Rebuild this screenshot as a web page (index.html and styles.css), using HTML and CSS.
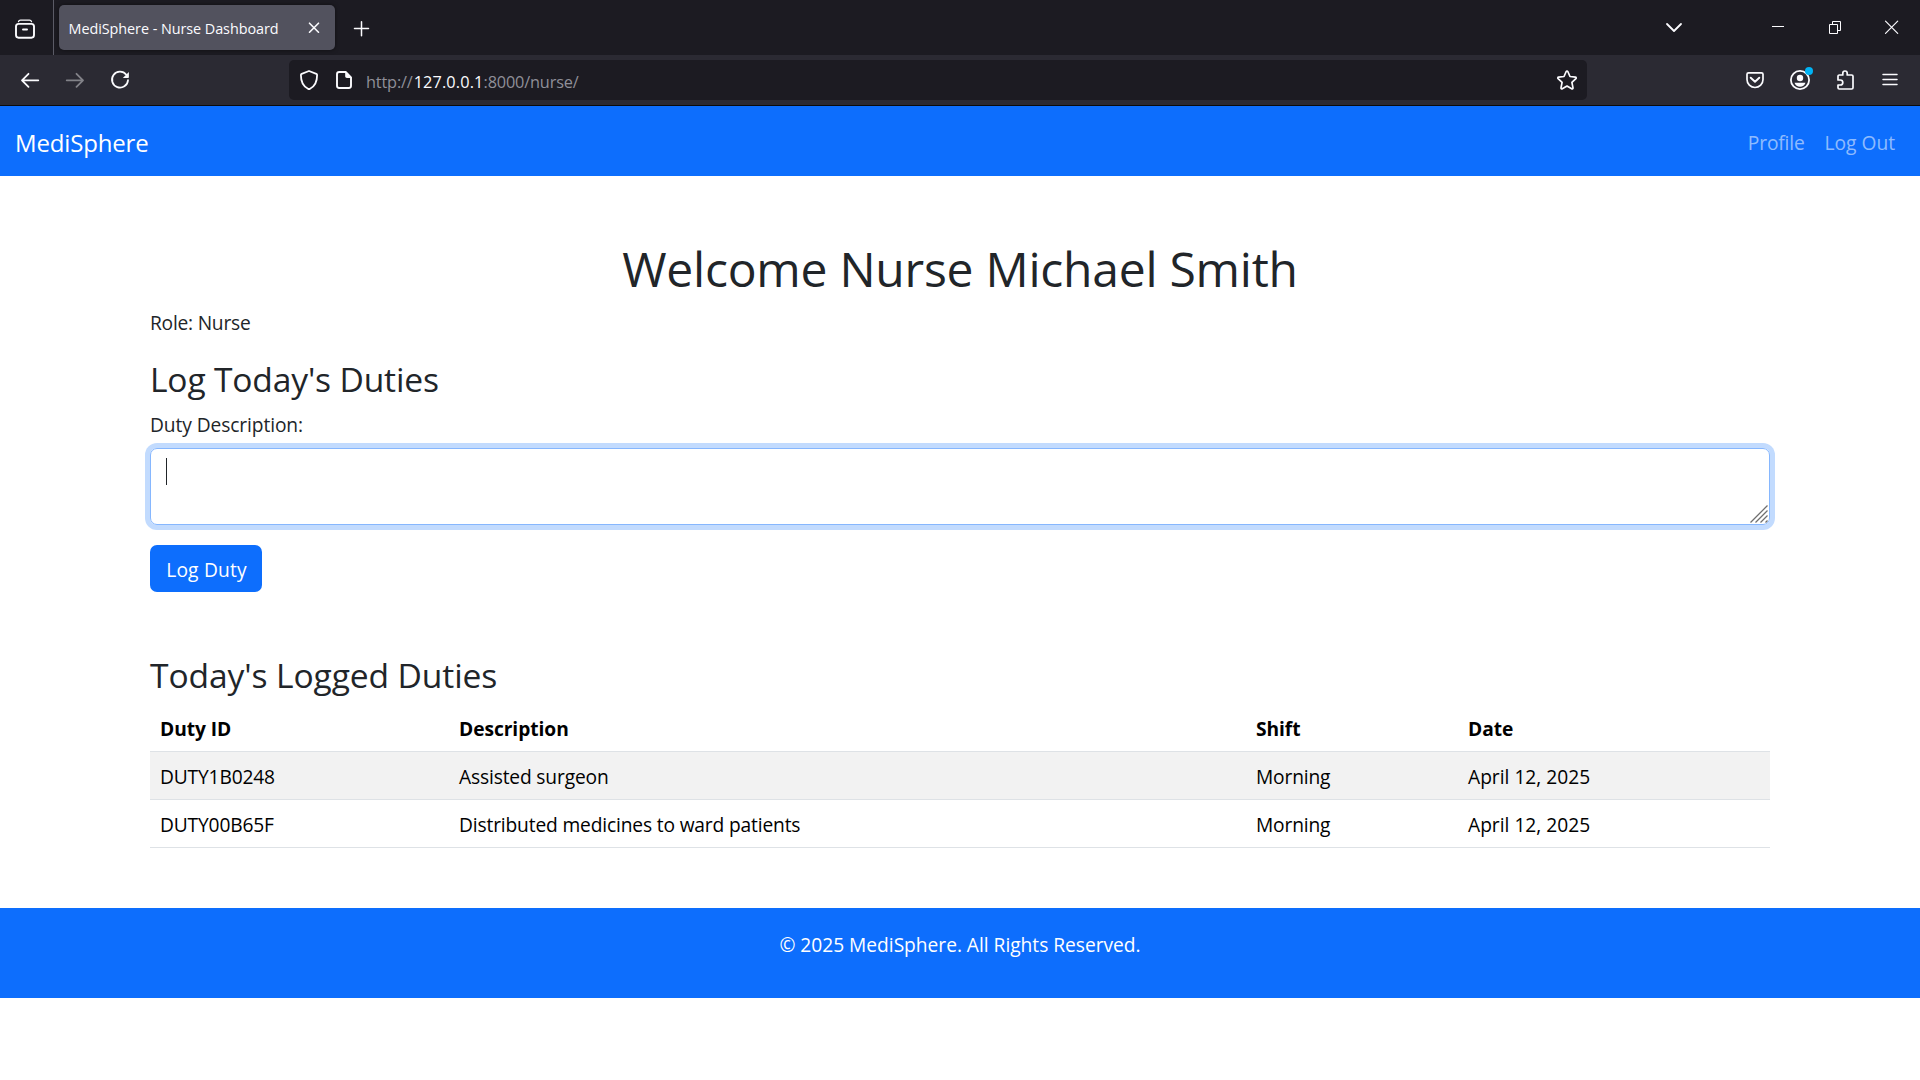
FILE: index.html
```html
<!DOCTYPE html>
<html lang="en">
<head>
<meta charset="utf-8">
<title>MediSphere - Nurse Dashboard</title>
<link rel="stylesheet" href="styles.css">
</head>
<body>
<header class="browser">
  <div class="tabstrip">
    <div class="view-btn">
      <svg class="icon" viewBox="0 0 24 24"><path d="M5.5 5.700C5.800 4.500 6.500 4.200 7.500 4.200h9c1 0 1.700.3 2 1.500" stroke-width="1.300"/><rect x="3" y="7.900" width="18" height="13.800" rx="2.600" stroke-width="1.900"/><path d="M10 13.500h4" stroke-width="1.900"/></svg>
    </div>
    <div class="tab">
      <span class="tab-title">MediSphere - Nurse Dashboard</span>
      <svg class="icon" viewBox="0 0 24 24"><path d="M7.500 7.200l9 9M16.500 7.200l-9 9" stroke-width="1.600"/></svg>
    </div>
    <div class="new-tab">
      <svg class="icon" viewBox="0 0 24 24"><path d="M12.500 6.800v14M5.500 13.500h14" stroke-width="1.500"/></svg>
    </div>
    <div class="all-tabs">
      <svg class="icon" viewBox="0 0 24 24"><path d="M5 9l7 7 7-7" stroke-width="1.800"/></svg>
    </div>
    <div class="window-btns">
      <div class="win"><svg class="icon" viewBox="0 0 24 24"><path d="M6 11.500h12" stroke-width="1" stroke-linecap="butt"/></svg></div>
      <div class="win"><svg class="icon sharp" viewBox="0 0 24 24"><path d="M6.500 9.500h8v9h-8zM9.500 9.500v-3h8v9h-3" stroke-width="1"/></svg></div>
      <div class="win"><svg class="icon" viewBox="0 0 24 24"><path d="M5.500 6.200L17.700 18.400M17.700 6.200L5.500 18.400" stroke-width="1.200"/></svg></div>
    </div>
  </div>
  <div class="toolbar">
    <div class="tool"><svg class="icon" viewBox="0 0 24 24"><path d="M20.300 12.300H4.500M10.500 5.800L4 12.300l6.500 6.500" stroke-width="1.800"/></svg></div>
    <div class="tool dim"><svg class="icon" viewBox="0 0 24 24"><path d="M3.700 12.300h15.800M13.500 5.800l6.500 6.500-6.500 6.500" stroke-width="1.800"/></svg></div>
    <div class="tool"><svg class="icon" viewBox="0 0 24 24"><path d="M18.300 6.700A8 8 0 1 0 20 12.200" stroke-width="1.800"/><path class="solid" d="M20.900 4v5.300c0 .5-.3.700-.8.700h-5.300z"/></svg></div>
    <div class="urlbar">
      <svg class="icon shield" viewBox="0 0 24 24"><path d="M12 3l7.300 2.800c.6.300.8.700.8 1.300 0 5.500-2 11.300-7.100 13.700-.7.300-1.300.3-2 0C5.900 18.400 3.900 12.600 3.900 7.100c0-.6.200-1 .8-1.300z" stroke-width="1.800"/></svg>
      <svg class="icon" viewBox="0 0 24 24"><path d="M13.700 4H7.200C6 4 5 5 5 6.200v11.600C5 19 6 20 7.200 20h9.600c1.200 0 2.200-1 2.200-2.200V9.300z" stroke-width="1.900"/><path class="solid" d="M13.200 3.500v4.800c0 1 .7 1.700 1.700 1.700h4.600z"/></svg>
      <span class="url">http://<b>127.0.0.1</b>:8000/nurse/</span>
      <svg class="icon star" viewBox="0 0 24 24"><path d="M11.200 3.500c.3-.7 1.300-.7 1.600 0l2.200 5 5.400.6c.8.100 1.100 1 .5 1.600l-4 3.700 1.100 5.500c.100.700-.7 1.300-1.300.9L12 18l-4.700 2.800c-.6.400-1.400-.2-1.300-.9l1.100-5.500-4-3.700c-.6-.6-.3-1.500.5-1.600L9 8.500z" stroke-width="1.700"/></svg>
    </div>
    <div class="tool"><svg class="icon" viewBox="0 0 24 24"><path d="M5.500 4.800h13c.9 0 1.500.6 1.500 1.500v5.200a8 8 0 0 1-16 0V6.300c0-.9.600-1.500 1.500-1.500z" stroke-width="1.700"/><path d="M7.700 9.700l4.300 4.100 4.300-4.100" stroke-width="1.900"/></svg></div>
    <div class="tool account"><svg class="icon" viewBox="0 0 24 24"><circle cx="12" cy="12" r="9.100" stroke-width="1.800"/><circle class="solid" cx="12" cy="10" r="3.200"/><path class="solid" d="M6.500 14.700h11c-.9 2.600-3 4-5.500 4s-4.600-1.400-5.500-4z"/></svg><span class="dot"></span></div>
    <div class="tool"><svg class="icon" viewBox="0 0 24 24"><path d="M5 12V8.300C5 7.400 5.500 7 6.300 7h3.500V5.200a2.200 2.200 0 0 1 4.400 0V7h4.400c.9 0 1.400.5 1.400 1.300v11.400c0 .9-.5 1.300-1.400 1.300H6.300C5.500 21 5 20.600 5 19.700V17h2.300a2.500 2.500 0 0 0 0-5z" stroke-width="1.700"/></svg></div>
    <div class="tool"><svg class="icon" viewBox="0 0 24 24"><path d="M5 6.500h14M5 11.500h14M5 16.500h14" stroke-width="1.500"/></svg></div>
  </div>
</header>

<nav class="navbar">
  <a class="brand">MediSphere</a>
  <a class="nav-link">Profile</a>
  <a class="nav-link">Log Out</a>
</nav>

<main class="container">
  <h1>Welcome Nurse Michael Smith</h1>
  <p class="role">Role: Nurse</p>
  <h2>Log Today's Duties</h2>
  <div class="label">Duty Description:</div>
  <div class="textarea">
    <span class="caret"></span>
    <svg class="grip" viewBox="0 0 18 18"><path d="M.5 17.500l17-17M5.500 17.500l12-12M10.500 17.500l7-7M15.500 17.500l2-2"/></svg>
  </div>
  <button class="btn">Log Duty</button>
  <h2 class="logged">Today's Logged Duties</h2>
  <table class="table">
    <colgroup><col class="c-id"><col class="c-desc"><col class="c-shift"><col></colgroup>
    <thead><tr><th>Duty ID</th><th>Description</th><th>Shift</th><th>Date</th></tr></thead>
    <tbody>
      <tr><td>DUTY1B0248</td><td>Assisted surgeon</td><td>Morning</td><td>April 12, 2025</td></tr>
      <tr><td>DUTY00B65F</td><td>Distributed medicines to ward patients</td><td>Morning</td><td>April 12, 2025</td></tr>
    </tbody>
  </table>
</main>

<footer class="footer">© 2025 MediSphere. All Rights Reserved.</footer>
</body>
</html>
```
FILE: styles.css
```css
* { box-sizing: border-box; }

body {
  margin: 0;
  height: 1080px;
  overflow: hidden;
  background: #fff;
  color: #212529;
  font: 19.2px/30px "Open Sans", "Noto Sans", sans-serif;
  letter-spacing: -0.008em;
}

/* Browser chrome */
.browser { color: #fbfbfe; }
.icon {
  display: block;
  flex: none;
  width: 24px;
  height: 24px;
  fill: none;
  stroke: #fbfbfe;
  stroke-linecap: round;
  stroke-linejoin: round;
}
.icon .solid { fill: #fbfbfe; stroke: none; }
.icon.sharp { stroke-linejoin: miter; stroke-linecap: butt; }

.tabstrip {
  display: flex;
  align-items: center;
  height: 55px;
  padding-bottom: 1px;
  background: #1c1b22;
}
.view-btn {
  display: flex;
  align-items: center;
  width: 54px;
  height: 55px;
  padding-left: 13px;
  border-right: 1px solid #5b5b66;
  margin-bottom: -1px;
}
.tab {
  display: flex;
  align-items: center;
  justify-content: space-between;
  width: 276px;
  height: 45px;
  margin: 1px 0 0 5px;
  padding: 0 9px 0 9.5px;
  border-radius: 5px;
  background: #52525e;
  box-shadow: 0 0 4px rgba(0, 0, 0, .5);
}
.tab-title {
  font-size: 14.4px;
  letter-spacing: -0.004em;
  padding-top: 2px;
}
.new-tab { padding-left: 14px; }
.all-tabs { margin-left: auto; }
.window-btns { display: flex; margin-left: 63px; }
.win {
  display: flex;
  justify-content: center;
  width: 57px;
}

.toolbar {
  display: flex;
  align-items: center;
  height: 51px;
  padding: 0 8px 0 7px;
  border-bottom: 1px solid #0c0c0d;
  background: #2b2a33;
}
.tool {
  display: flex;
  justify-content: center;
  width: 45px;
}
.tool.dim { opacity: .42; }
.account { position: relative; }
.dot {
  position: absolute;
  left: 28px;
  top: -1px;
  width: 8px;
  height: 8px;
  border-radius: 50%;
  background: #00b3f4;
}
.urlbar {
  display: flex;
  align-items: center;
  width: 1298px;
  height: 40px;
  margin: 0 auto 0 147px;
  padding: 0 8px;
  border-radius: 5px;
  background: #1c1b22;
}
.shield { margin: 0 11px 0 0; }
.url {
  padding: 4px 0 0 10px;
  font-size: 16.3px;
  letter-spacing: -0.01em;
  color: #8f8f98;
}
.url b { font-weight: 400; color: #fbfbfe; letter-spacing: 0.008em; margin-left: 1px; }
.star { margin-left: auto; }

/* Site navbar */
.navbar {
  display: flex;
  align-items: center;
  gap: 20px;
  height: 70px;
  padding: 3px 25px 0 15px;
  background: #0d6efd;
}
.brand {
  margin-right: auto;
  font-size: 24px;
  color: #fff;
}
.nav-link { color: rgba(255, 255, 255, .55); letter-spacing: 0; }
.nav-link:nth-child(2) { letter-spacing: -0.009em; }

/* Page content */
.container {
  width: 1620px;
  margin: 0 auto;
  padding-top: 63px;
}
h1, h2, p { margin: 0; }
h1 {
  font-size: 48px;
  line-height: 60px;
  font-weight: 400;
  text-align: center;
  letter-spacing: -0.005em;
}
h2 {
  font-size: 33.6px;
  line-height: 42px;
  font-weight: 400;
  letter-spacing: -0.005em;
}
.role { margin: 9px 0 20px; letter-spacing: -0.012em; }
.label { margin: 10px 0 8px; letter-spacing: -0.005em; }
.textarea {
  position: relative;
  height: 77px;
  padding: 9px 15px;
  border: 1px solid #86b7fe;
  border-radius: 7px;
  box-shadow: 0 0 0 5px rgba(13, 110, 253, .25);
}
.caret {
  display: block;
  width: 1px;
  height: 27px;
  background: #212529;
}
.grip {
  position: absolute;
  right: 1px;
  bottom: 1px;
  width: 18px;
  height: 18px;
  fill: none;
  stroke: #6f6f6f;
  stroke-width: 1.3;
}
.btn {
  display: block;
  width: 112px;
  height: 47px;
  margin-top: 20px;
  padding: 3px 0 0 1px;
  border: 0;
  border-radius: 7px;
  background: #0d6efd;
  color: #fff;
  font: inherit;
  letter-spacing: 0.01em;
}
.logged { margin-top: 62px; letter-spacing: -0.003em; }
.table {
  width: 100%;
  margin-top: 8px;
  border-collapse: separate;
  border-spacing: 0;
  table-layout: fixed;
  color: #000;
}
.c-id { width: 299px; }
.c-desc { width: 797px; }
.c-shift { width: 212px; }
.table th, .table td {
  height: 48px;
  padding: 11px 10px 9px;
  border-bottom: 1px solid #dee2e6;
  line-height: 27px;
  text-align: left;
}
.table th { font-weight: 700; font-size: 19.2px; letter-spacing: -0.003em; }
.table td:nth-child(4) { letter-spacing: 0; }
.table tbody tr:first-child td { background: #f2f2f2; }

.footer {
  height: 90px;
  margin-top: 60px;
  padding-top: 22px;
  background: #0d6efd;
  color: #fff;
  text-align: center;
  letter-spacing: -0.0013em;
}
```
